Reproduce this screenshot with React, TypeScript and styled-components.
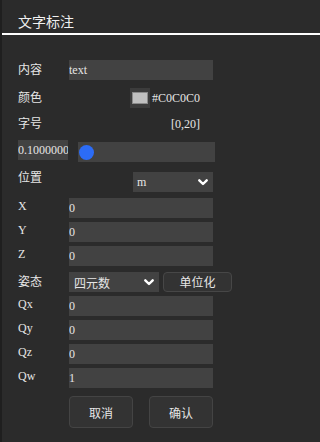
import React from "react";
import styled, { createGlobalStyle } from "styled-components";

const Global = createGlobalStyle`
  html, body, #root { margin: 0; padding: 0; height: 100%; }
  body {
    background: #1f1f1f;
    font-family: "Liberation Serif", "Noto Sans CJK SC", serif;
    color: #e6e6e6;
    overflow: hidden;
  }
`;

const Panel = styled.div`
  margin-left: 2px;
  min-height: 100%;
  background: #2b2b2b;
  box-sizing: border-box;
`;

const Header = styled.div`
  height: 35px;
  box-sizing: border-box;
  padding: 9px 0 0 16px;
  border-bottom: 2px solid #ffffff;
  display: flex;
  align-items: center;
  font-family: "Noto Sans CJK SC", sans-serif;
  font-size: 14px;
  color: #f0f0f0;
`;

const Body = styled.div`
  padding: 25px 0 0 16px;
  display: flex;
  flex-direction: column;
`;

const Row = styled.div<{ $mt?: number }>`
  display: flex;
  align-items: flex-start;
  margin-top: ${(p) => p.$mt ?? 0}px;
`;

const Label = styled.div<{ $lh?: number }>`
  width: 51px;
  flex: none;
  font-size: 12px;
  line-height: ${(p) => p.$lh ?? 20}px;
  color: #e6e6e6;
  white-space: nowrap;
`;

const Field = styled.div`
  width: 144px;
  height: 20px;
  background: #424242;
  font-size: 12px;
  line-height: 20px;
  color: #e6e6e6;
  white-space: nowrap;
  overflow: hidden;
`;

const Value = styled.div`
  width: 144px;
  height: 20px;
  box-sizing: border-box;
  padding-right: 13px;
  display: flex;
  align-items: center;
  justify-content: flex-end;
  gap: 2px;
  font-size: 12px;
  line-height: 20px;
  color: #e6e6e6;
`;

const Swatch = styled.div`
  width: 20px;
  height: 20px;
  box-sizing: border-box;
  background: #3c3c3c;
  display: flex;
  align-items: center;
  justify-content: center;
`;

const SwatchInner = styled.div<{ $color: string }>`
  width: 16px;
  height: 12px;
  box-sizing: border-box;
  border: 1px solid #8a8a8a;
  background: ${(p) => p.$color};
`;

const NumBox = styled.div`
  width: 50px;
  height: 20px;
  background: #424242;
  font-size: 12px;
  line-height: 20px;
  color: #e6e6e6;
  white-space: nowrap;
  overflow: hidden;
`;

const Track = styled.div`
  margin: 2px 0 0 10px;
  width: 137px;
  height: 20px;
  background: #424242;
  display: flex;
  align-items: center;
  padding-left: 1px;
  box-sizing: border-box;
`;

const Thumb = styled.div`
  width: 15px;
  height: 15px;
  border-radius: 50%;
  background: #2c6cf6;
`;

const Select = styled.div<{ $w: number; $ml?: number; $pl?: number }>`
  margin-left: ${(p) => p.$ml ?? 0}px;
  width: ${(p) => p.$w}px;
  height: 20px;
  box-sizing: border-box;
  padding: 0 5px 0 ${(p) => p.$pl ?? 4}px;
  background: #424242;
  display: flex;
  align-items: center;
  justify-content: space-between;
  font-size: 12px;
  color: #e6e6e6;
`;

const Chevron = () => (
  <svg width="10" height="7" viewBox="0 0 10 7">
    <polyline
      points="1.3,1.3 5,5 8.7,1.3"
      fill="none"
      stroke="#ffffff"
      strokeWidth="2.4"
      strokeLinecap="round"
      strokeLinejoin="round"
    />
  </svg>
);

const SmallButton = styled.button`
  margin-left: 4px;
  width: 69px;
  height: 20px;
  box-sizing: border-box;
  border: 1px solid #474747;
  border-radius: 4px;
  background: #333333;
  color: #e6e6e6;
  font-family: "Noto Sans CJK SC", sans-serif;
  font-size: 12px;
  line-height: 18px;
  padding: 0;
`;

const Actions = styled.div`
  margin: 8px 0 0 51px;
  width: 144px;
  display: flex;
  justify-content: space-between;
`;

const ActionButton = styled.button`
  width: 64px;
  height: 32px;
  box-sizing: border-box;
  border: 1px solid #444444;
  border-radius: 4px;
  background: #333333;
  color: #e6e6e6;
  font-family: "Noto Sans CJK SC", sans-serif;
  font-size: 12px;
  padding: 0;
`;

const coords = [
  { k: "X", v: "0", mt: 6 },
  { k: "Y", v: "0", mt: 4 },
  { k: "Z", v: "0", mt: 4 },
];

const quats = [
  { k: "Qx", v: "0" },
  { k: "Qy", v: "0" },
  { k: "Qz", v: "0" },
  { k: "Qw", v: "1" },
];

export default function App() {
  return (
    <>
      <Global />
      <Panel>
        <Header>文字标注</Header>
        <Body>
          <Row>
            <Label>内容</Label>
            <Field>text</Field>
          </Row>
          <Row $mt={8}>
            <Label>颜色</Label>
            <Value>
              <Swatch>
                <SwatchInner $color="#C0C0C0" />
              </Swatch>
              #C0C0C0
            </Value>
          </Row>
          <Row $mt={6}>
            <Label>字号</Label>
            <Value>[0,20]</Value>
          </Row>
          <Row $mt={6}>
            <NumBox>0.1000000</NumBox>
            <Track>
              <Thumb />
            </Track>
          </Row>
          <Row $mt={10}>
            <Label $lh={12}>位置</Label>
            <Select $w={80} $ml={64}>
              m
              <Chevron />
            </Select>
          </Row>
          {coords.map((c) => (
            <Row key={c.k} $mt={c.mt}>
              <Label $lh={16}>{c.k}</Label>
              <Field>{c.v}</Field>
            </Row>
          ))}
          <Row $mt={6}>
            <Label>姿态</Label>
            <Select $w={90} $pl={5}>
              <span style={{ fontFamily: '"Noto Sans CJK SC", sans-serif' }}>四元数</span>
              <Chevron />
            </Select>
            <SmallButton>单位化</SmallButton>
          </Row>
          {quats.map((q) => (
            <Row key={q.k} $mt={4}>
              <Label $lh={16}>{q.k}</Label>
              <Field>{q.v}</Field>
            </Row>
          ))}
          <Actions>
            <ActionButton>取消</ActionButton>
            <ActionButton>确认</ActionButton>
          </Actions>
        </Body>
      </Panel>
    </>
  );
}
